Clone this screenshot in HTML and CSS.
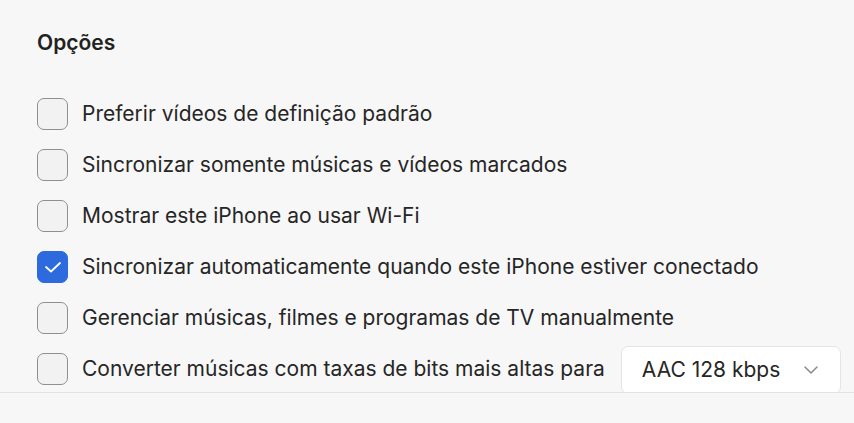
FILE: index.html
```html
<!DOCTYPE html>
<html lang="pt-BR">
  <head>
    <meta charset="UTF-8" />
    <title>Opções</title>
    <link rel="stylesheet" href="styles.css">
  </head>
  <body>
    <div class="panel">
      <h2 class="title">Opções</h2>
      <ul class="options">
        <li class="option">
          <span class="check"></span>
          <span class="label">Preferir vídeos de definição padrão</span>
        </li>
        <li class="option">
          <span class="check"></span>
          <span class="label">Sincronizar somente músicas e vídeos marcados</span>
        </li>
        <li class="option">
          <span class="check"></span>
          <span class="label">Mostrar este iPhone ao usar Wi-Fi</span>
        </li>
        <li class="option">
          <span class="check checked">
            <svg width="18" height="12" viewBox="0 0 18 12">
              <path d="M2 6 L7 10.5 L16 2" fill="none" stroke="#fff" stroke-width="1.8" stroke-linecap="round" stroke-linejoin="round" />
            </svg>
          </span>
          <span class="label">Sincronizar automaticamente quando este iPhone estiver conectado</span>
        </li>
        <li class="option">
          <span class="check"></span>
          <span class="label">Gerenciar músicas, filmes e programas de TV manualmente</span>
        </li>
        <li class="option">
          <span class="check"></span>
          <span class="label">Converter músicas com taxas de bits mais altas para</span>
          <div class="select">
            <span>AAC 128 kbps</span>
            <svg width="14" height="8" viewBox="0 0 14 8">
              <path d="M1 1 L7 7 L13 1" fill="none" stroke="#8a8a8a" stroke-width="1.5" stroke-linecap="round" stroke-linejoin="round" />
            </svg>
          </div>
        </li>
      </ul>
    </div>
    <div class="footer"></div>
  </body>
</html>
```
FILE: styles.css
```css
html {
  box-sizing: border-box;
}
body {
  margin: 0;
  padding: 0;
  background-color: #f7f7f7;
  font-family: Inter, "Noto Sans", sans-serif;
  color: #262626;
}
.panel {
  height: 392px;
  overflow: hidden;
  padding: 0 0 0 37px;
  box-sizing: border-box;
}
.title {
  margin: 0;
  padding-top: 30px;
  font-size: 21px;
  font-weight: 600;
  line-height: 26px;
  color: #222;
}
.options {
  list-style: none;
  margin: 0;
  padding: 0;
  margin-top: 32px;
}
.option {
  display: flex;
  align-items: center;
  height: 51px;
}
.check {
  box-sizing: border-box;
  width: 31px;
  height: 32px;
  border: 1.5px solid #8f8f8f;
  border-radius: 7px;
  background-color: #f2f2f2;
  display: flex;
  align-items: center;
  justify-content: center;
  flex-shrink: 0;
}
.check.checked {
  background-color: #2c6ade;
  border-color: #2c6ade;
}
.label {
  margin-left: 14px;
  font-size: 21px;
  white-space: nowrap;
}
.select {
  margin-left: 16px;
  box-sizing: border-box;
  width: 220px;
  height: 48px;
  flex-shrink: 0;
  background-color: #fff;
  border: 1px solid #e4e4e4;
  border-radius: 7px;
  display: flex;
  align-items: center;
  justify-content: space-between;
  padding: 0 22px 0 20px;
  font-size: 21px;
  margin-top: 2px;
}
.footer {
  border-top: 1px solid #e2e2e2;
  height: 30px;
}
```
